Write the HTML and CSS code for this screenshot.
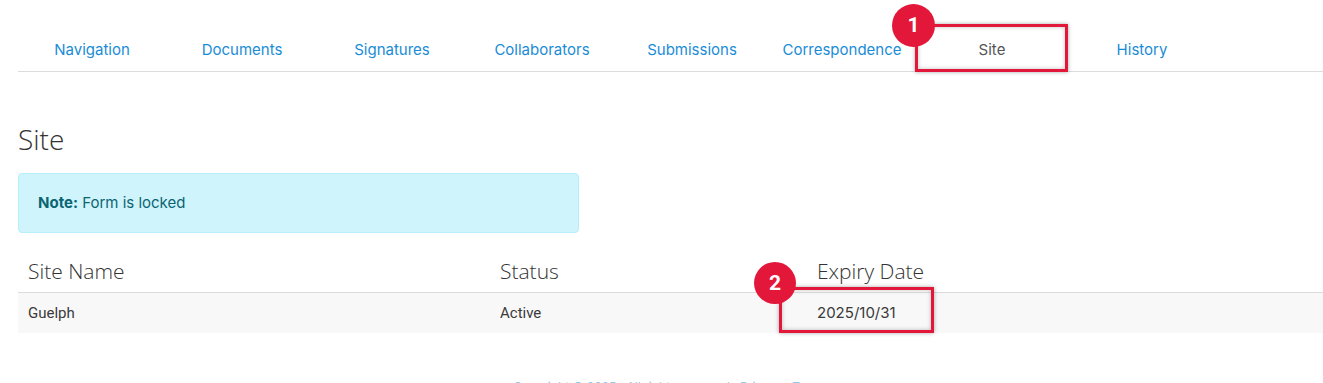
FILE: index.html
```html
<!DOCTYPE html>
<html lang="en">
<head>
  <meta charset="UTF-8" />
  <title>Site</title>
  <link rel="stylesheet" href="styles.css">
</head>
<body>
<div class="page">

  <!-- tabs -->
  <nav class="tabs">
    <a class="tab" href="#">Navigation</a>
    <a class="tab" href="#">Documents</a>
    <a class="tab" href="#">Signatures</a>
    <a class="tab" href="#">Collaborators</a>
    <a class="tab" href="#">Submissions</a>
    <a class="tab" href="#">Correspondence</a>
    <a class="tab active" href="#">
      Site
      <span class="mark-box"></span>
      <span class="mark-badge badge-1">1</span>
    </a>
    <a class="tab" href="#">History</a>
  </nav>

  <h2 class="title">Site</h2>

  <div class="alert"><strong>Note:</strong> Form is locked</div>

  <table class="sites">
    <thead>
      <tr>
        <th class="col-name">Site Name</th>
        <th class="col-status">Status</th>
        <th>Expiry Date</th>
      </tr>
    </thead>
    <tbody>
      <tr>
        <td>Guelph</td>
        <td>Active</td>
        <td class="expiry">
          2025/10/31
          <span class="mark-box box-2"></span>
          <span class="mark-badge badge-2">2</span>
        </td>
      </tr>
    </tbody>
  </table>

  <footer class="foot">Copyright &copy; 2025 &middot; All rights reserved &middot; Privacy &middot; Terms</footer>
</div>
</body>
</html>
```

FILE: styles.css
```css
body {
  margin: 0;
  background: white;
  font-family: Inter, "Noto Sans", sans-serif;
  color: #333;
}

.page {
  padding-left: 18px;
}

/* tabs */
.tabs {
  display: flex;
  margin-top: 27px;
  border-bottom: 1px solid #dcdcdc;
}

.tab {
  position: relative;
  width: 150px;
  height: 44px;
  line-height: 45px;
  text-align: center;
  font-size: 15px;
  color: #1a8cd6;
  text-decoration: none;
}

.tab:first-child {
  margin-left: -1px;
}

.tab.active {
  color: #555;
}

/* red annotation marks */
.mark-box {
  position: absolute;
  left: -2px;
  right: -1px;
  top: -3px;
  bottom: -1px;
  border: 3px solid #e3173a;
  box-shadow: 0 0 4px rgba(0,0,0,0.35), inset 0 0 4px rgba(0,0,0,0.25);
}

.mark-badge {
  position: absolute;
  width: 43px;
  height: 43px;
  border-radius: 50%;
  background: #e3173a;
  color: white;
  font-family: Roboto, sans-serif;
  font-weight: bold;
  font-size: 21px;
  line-height: 43px;
  text-align: center;
  z-index: 2;
}

.badge-1 {
  left: -25px;
  top: -23px;
}

.title {
  font-family: "Open Sans", sans-serif;
  font-weight: 300;
  font-size: 28px;
  line-height: 34px;
  margin: 50px 0 17px;
  color: #333;
}

.alert {
  width: 520px;
  padding: 16px 20px 16px 19px;
  font-size: 15px;
  line-height: 26px;
  background: #cff4fc;
  border: 1px solid #b6effb;
  border-radius: 4px;
  color: #0b6472;
}

.alert strong {
  font-weight: bold;
}

/* table */
.sites {
  width: 100%;
  margin-top: 19px;
  border-collapse: collapse;
}

.sites th {
  font-family: "Open Sans", sans-serif;
  font-weight: 300;
  font-size: 21px;
  line-height: 24px;
  text-align: left;
  padding: 7px 10px 9px;
  color: #333;
  border-bottom: 1px solid #dcdcdc;
}

.col-name {
  width: 452px;
}

.col-status {
  width: 297px;
}

.sites td {
  background: #f8f8f8;
  font-family: Roboto, sans-serif;
  font-size: 15px;
  line-height: 20px;
  padding: 10px;
  color: #3a3a3a;
}

.sites td.expiry {
  position: relative;
  font-family: Inter, sans-serif;
}

.box-2 {
  left: -28px;
  right: auto;
  width: 149px;
  top: -6px;
  bottom: 0;
}

.badge-2 {
  left: -53px;
  top: -31px;
  width: 42px;
  height: 42px;
  line-height: 42px;
}

.foot {
  margin-top: 46px;
  text-align: center;
  font-size: 12px;
  color: #8fc9e8;
}
```
